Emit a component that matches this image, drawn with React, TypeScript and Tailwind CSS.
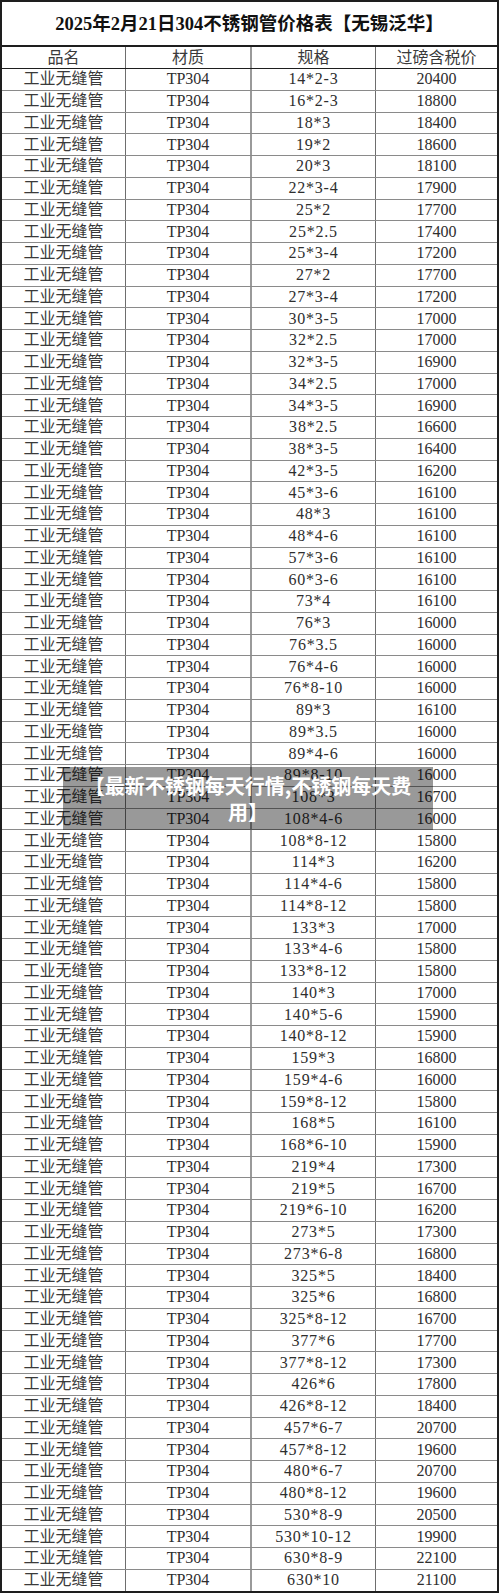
import React from "react";

const rows: [string, string][] = [
  ["14*2-3", "20400"],
  ["16*2-3", "18800"],
  ["18*3", "18400"],
  ["19*2", "18600"],
  ["20*3", "18100"],
  ["22*3-4", "17900"],
  ["25*2", "17700"],
  ["25*2.5", "17400"],
  ["25*3-4", "17200"],
  ["27*2", "17700"],
  ["27*3-4", "17200"],
  ["30*3-5", "17000"],
  ["32*2.5", "17000"],
  ["32*3-5", "16900"],
  ["34*2.5", "17000"],
  ["34*3-5", "16900"],
  ["38*2.5", "16600"],
  ["38*3-5", "16400"],
  ["42*3-5", "16200"],
  ["45*3-6", "16100"],
  ["48*3", "16100"],
  ["48*4-6", "16100"],
  ["57*3-6", "16100"],
  ["60*3-6", "16100"],
  ["73*4", "16100"],
  ["76*3", "16000"],
  ["76*3.5", "16000"],
  ["76*4-6", "16000"],
  ["76*8-10", "16000"],
  ["89*3", "16100"],
  ["89*3.5", "16000"],
  ["89*4-6", "16000"],
  ["89*8-10", "16000"],
  ["108*3", "16700"],
  ["108*4-6", "16000"],
  ["108*8-12", "15800"],
  ["114*3", "16200"],
  ["114*4-6", "15800"],
  ["114*8-12", "15800"],
  ["133*3", "17000"],
  ["133*4-6", "15800"],
  ["133*8-12", "15800"],
  ["140*3", "17000"],
  ["140*5-6", "15900"],
  ["140*8-12", "15900"],
  ["159*3", "16800"],
  ["159*4-6", "16000"],
  ["159*8-12", "15800"],
  ["168*5", "16100"],
  ["168*6-10", "15900"],
  ["219*4", "17300"],
  ["219*5", "16700"],
  ["219*6-10", "16200"],
  ["273*5", "17300"],
  ["273*6-8", "16800"],
  ["325*5", "18400"],
  ["325*6", "16800"],
  ["325*8-12", "16700"],
  ["377*6", "17700"],
  ["377*8-12", "17300"],
  ["426*6", "17800"],
  ["426*8-12", "18400"],
  ["457*6-7", "20700"],
  ["457*8-12", "19600"],
  ["480*6-7", "20700"],
  ["480*8-12", "19600"],
  ["530*8-9", "20500"],
  ["530*10-12", "19900"],
  ["630*8-9", "22100"],
  ["630*10", "21100"],
];

const font = {
  fontFamily: '"Liberation Serif", "Noto Sans CJK SC", serif',
};

export default function App() {
  return (
    <div
      className="relative w-[500px] h-[1596px] bg-white text-[#2e2e2e]"
      style={font}
    >
      <div className="w-[499px] border-2 border-[#1e1e1e]">
        <div className="h-[43px] flex items-center justify-center pt-[3px] text-[18.5px] font-bold text-[#111]">
          2025年2月21日304不锈钢管价格表【无锡泛华】
        </div>
        <div className="h-[23px] border-t-2 border-[#1e1e1e] grid grid-cols-[123px_125px_125px_1fr] text-[16px] leading-none text-[#3a3a3a]">
          <div className="flex items-center justify-center">品名</div>
          <div className="flex items-center justify-center border-l border-[#6e6e6e]">材质</div>
          <div className="flex items-center justify-center border-l-2 border-[#9a9a9a]">规格</div>
          <div className="flex items-center justify-center border-l border-[#6e6e6e]">过磅含税价</div>
        </div>
        {rows.map(([spec, price], i) => (
          <div
            key={i}
            className={`h-[21.75px] border-t grid grid-cols-[123px_125px_125px_1fr] text-[16px] leading-none ${
              i === 0 ? "border-[#1e1e1e]" : "border-[#8a8a8a]"
            }`}
          >
            <div className="flex items-center justify-center text-[#3a3a3a]">工业无缝管</div>
            <div className="flex items-center justify-center border-l border-[#6e6e6e]">TP304</div>
            <div className="flex items-center justify-center border-l-2 border-[#9a9a9a] tracking-[0.8px]">{spec}</div>
            <div className="flex items-center justify-center border-l border-[#6e6e6e]">{price}</div>
          </div>
        ))}
      </div>
      <div className="absolute left-[63px] top-[767px] w-[370px] h-[63px] bg-black/40 flex items-center justify-center px-[16px]">
        <p
          className="text-white font-bold text-[20px] leading-[26px] text-center"
          style={{ fontFamily: '"Noto Sans CJK SC", sans-serif' }}
        >
          【最新不锈钢每天行情,不锈钢每天费用】
        </p>
      </div>
    </div>
  );
}
